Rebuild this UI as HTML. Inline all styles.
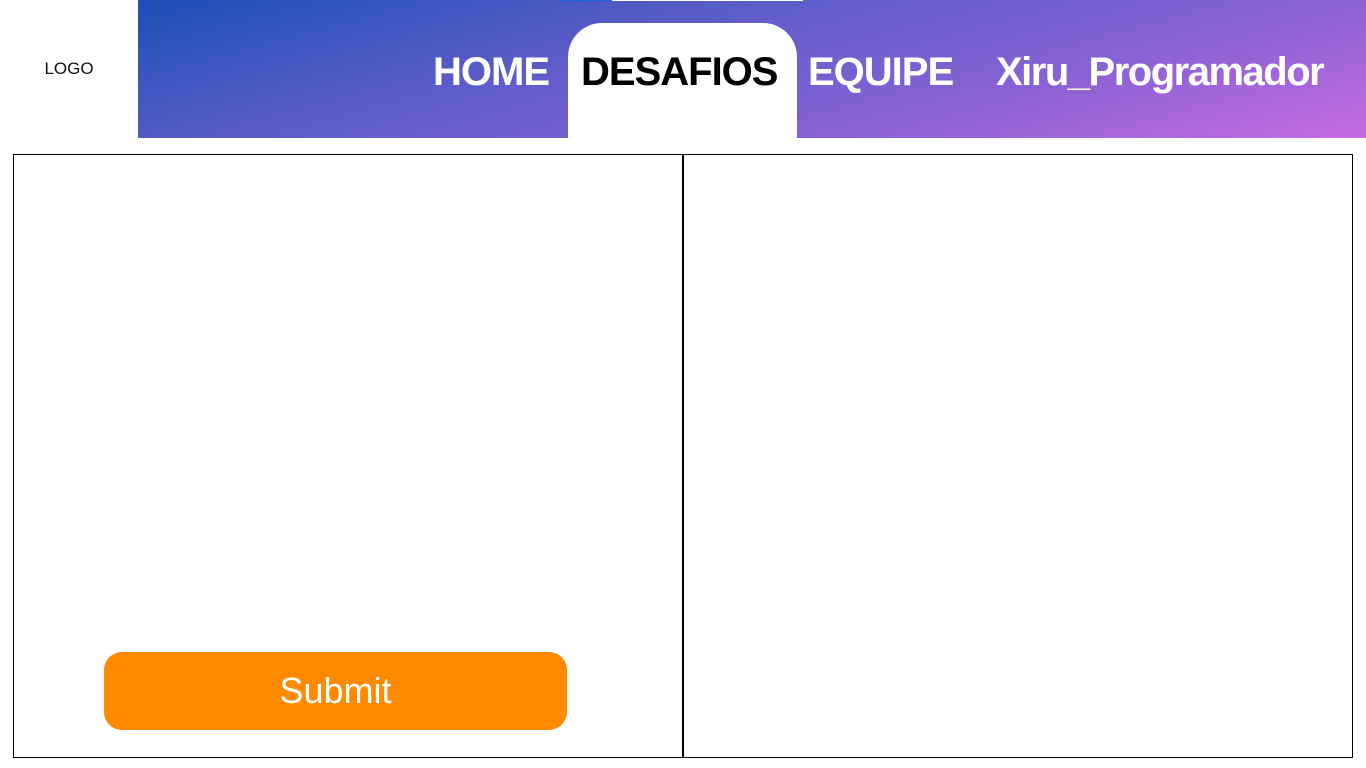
<!DOCTYPE html>
<html><head><style>
*{margin:0;padding:0;box-sizing:border-box}
body{width:1366px;height:768px;background:#fff;position:relative;overflow:hidden;font-family:"Liberation Sans",sans-serif}
.logo{position:absolute;left:0;top:0;width:138px;height:138px;background:#fff;display:flex;align-items:center;justify-content:center;font-size:17px;color:#111}
.hdr{position:absolute;left:138px;top:0;width:1228px;height:138px;background:linear-gradient(165deg,#1c4fb6 0%,#5a5cc8 35%,#8a62d4 70%,#c66be2 100%)}
.nav{position:absolute;top:48px;font-size:40px;font-weight:bold;color:#fff;line-height:48px}
.tab{position:absolute;left:568px;top:23px;width:229px;height:115px;background:#fff;border-radius:34px 34px 0 0}
.box{position:absolute;top:154px;height:604px;border:1px solid #000}
.btn{position:absolute;left:104px;top:652px;width:463px;height:78px;background:#ff8a00;border-radius:18px;color:#fff;font-size:36px;display:flex;align-items:center;justify-content:center}
</style></head><body>
<div class="logo">LOGO</div>
<div class="hdr"></div>
<div style="position:absolute;left:563px;top:0;width:49px;height:1px;background:#1166dd"></div>
<div style="position:absolute;left:612px;top:0;width:191px;height:1px;background:#fff"></div>
<div class="tab"></div>
<div class="nav" style="left:433px;letter-spacing:-1px">HOME</div>
<div class="nav" style="left:581px;color:#000;letter-spacing:-1px">DESAFIOS</div>
<div class="nav" style="left:808px;letter-spacing:-1px">EQUIPE</div>
<div class="nav" style="left:996px;letter-spacing:-1.5px">Xiru_Programador</div>
<div class="box" style="left:13px;width:670px"></div>
<div class="box" style="left:683px;width:670px"></div>
<div class="btn">Submit</div>
</body></html>
